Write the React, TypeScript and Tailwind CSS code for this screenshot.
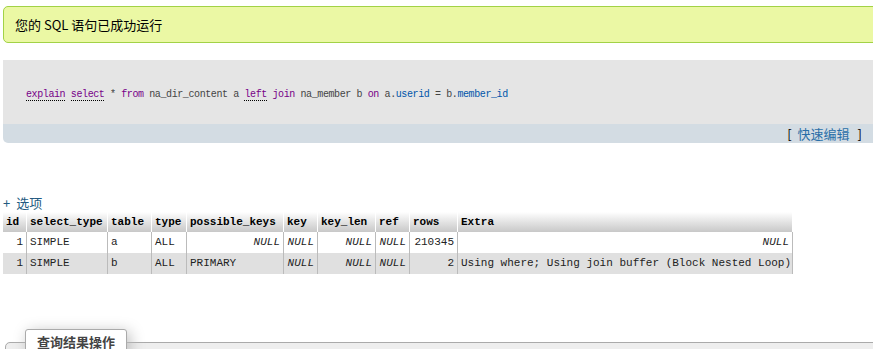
const cjk = "font-['Noto_Sans_CJK_SC',sans-serif]"
const mono = "font-['Liberation_Mono','Noto_Sans_CJK_SC',monospace]"

const cols = 'grid grid-cols-[24px_81px_44px_35px_97px_34px_58px_34px_48px_335px]'

type Cell = { v: string; right?: boolean; nil?: boolean }

const rows: Cell[][] = [
  [
    { v: '1', right: true },
    { v: 'SIMPLE' },
    { v: 'a' },
    { v: 'ALL' },
    { v: 'NULL', nil: true },
    { v: 'NULL', nil: true },
    { v: 'NULL', nil: true },
    { v: 'NULL', nil: true },
    { v: '210345', right: true },
    { v: 'NULL', nil: true },
  ],
  [
    { v: '1', right: true },
    { v: 'SIMPLE' },
    { v: 'b' },
    { v: 'ALL' },
    { v: 'PRIMARY' },
    { v: 'NULL', nil: true },
    { v: 'NULL', nil: true },
    { v: 'NULL', nil: true },
    { v: '2', right: true },
    { v: 'Using where; Using join buffer (Block Nested Loop)' },
  ],
]

const headers = ['id', 'select_type', 'table', 'type', 'possible_keys', 'key', 'key_len', 'ref', 'rows', 'Extra']

function Kw({ children, doc }: { children: string; doc?: boolean }) {
  return (
    <span className={`text-[#770088] ${doc ? 'border-b border-dotted border-black' : ''}`}>{children}</span>
  )
}

function Id({ children }: { children: string }) {
  return <span className="text-[#0055aa]">{children}</span>
}

export default function App() {
  return (
    <div className={`w-[873px] h-[349px] overflow-hidden bg-white pl-[3px] pt-[6px] ${cjk}`}>
      {/* success message */}
      <div className="w-[880px] rounded-[5px] border border-[#a2d246] bg-[#ebf8a4] pl-[11px] py-[10px] text-[13px] leading-[15px] text-black">
        您的 SQL 语句已成功运行
      </div>

      {/* sql box */}
      <div className="mt-[17px] w-[870px] rounded-bl-[5px] overflow-hidden">
        <div className="bg-[#e5e5e5] h-[64px] pl-[23px] pt-[28px]">
          <code className={`block ${mono} text-[10px] tracking-[-0.4px] leading-[14px] text-[#444] whitespace-pre`}>
            <Kw doc>explain</Kw> <Kw doc>select</Kw> * <Kw>from</Kw> na_dir_content a <Kw doc>left</Kw> <Kw>join</Kw>{' '}
            na_member b <Kw>on</Kw> a.<Id>userid</Id> = b.<Id>member_id</Id>
          </code>
        </div>
        <div className="bg-[#d3dce3] h-[19px] flex items-center justify-end pr-[11px] text-[13px] leading-[19px]">
          <span className="text-black">[</span>
          <span className="ml-[6px] mr-[8px] text-[#2a6fa8]">快速编辑</span>
          <span className="text-black">]</span>
        </div>
      </div>

      {/* options */}
      <div className="mt-[52px] flex text-[13px] leading-[16px] text-[#235a81]">
        <span>+</span>
        <span className="ml-[6px]">选项</span>
      </div>

      {/* explain table */}
      <div className={`mt-[1px] w-[790px] ${mono} text-[11px] text-[#222]`}>
        <div className={`${cols} h-[20px] bg-linear-to-b from-white to-[#c8c8c8]`}>
          {headers.map((h) => (
            <div key={h} className="border-r border-white pl-[3px] font-bold text-black leading-[20px]">
              {h}
            </div>
          ))}
        </div>
        {rows.map((r, i) => (
          <div key={i} className={`${cols} h-[21px] ${i % 2 ? 'bg-[#e0e0e0]' : 'bg-white'}`}>
            {r.map((c, j) => (
              <div
                key={j}
                className={`border-r border-[#bbb] px-[3px] leading-[21px] whitespace-nowrap overflow-hidden ${
                  c.right || c.nil ? 'text-right' : ''
                } ${c.nil ? 'italic' : ''}`}
              >
                {c.v}
              </div>
            ))}
          </div>
        ))}
      </div>

      {/* query results operations */}
      <fieldset className="mt-[55px] ml-[2px] w-[880px] h-[60px] rounded-tl-[5px] border border-[#aaa] bg-[#eee] pl-[19px]">
        <legend className="bg-white border border-[#aaa] rounded-t-[3px] px-[11px] py-[3px] text-[13px] leading-[18px] font-bold text-[#444] shadow-[3px_3px_15px_#bbb]">
          查询结果操作
        </legend>
      </fieldset>
    </div>
  )
}
